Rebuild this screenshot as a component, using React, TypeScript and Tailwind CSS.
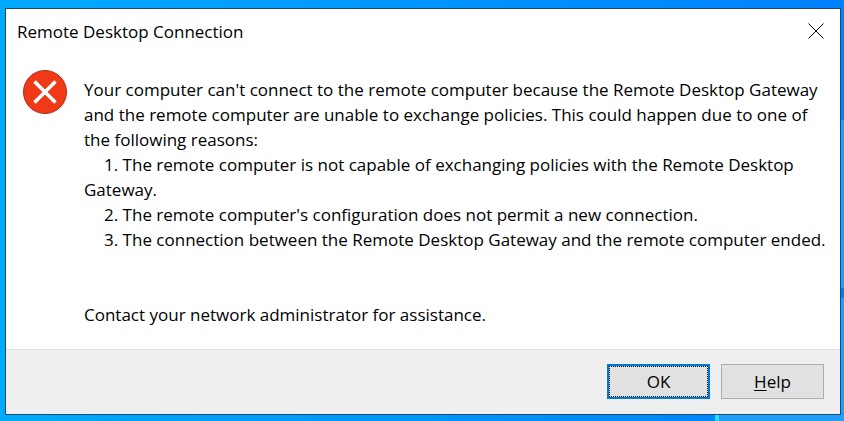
const reasons = [
  ["1. The remote computer is not capable of exchanging policies with the Remote Desktop", "Gateway."],
  ["2. The remote computer's configuration does not permit a new connection."],
  ["3. The connection between the Remote Desktop Gateway and the remote computer ended."],
];

function Wallpaper() {
  return (
    <div aria-hidden="true" className="absolute inset-0 -z-10 bg-linear-to-r from-[#00aaff] to-[#0080ff]">
      <div className="absolute top-[120px] right-0 bottom-0 w-[125px] bg-[#1f9eff]" />
      <div className="absolute top-[288px] right-0 h-[10px] w-[125px] bg-[#007ff0]" />
      <div className="absolute right-[125px] bottom-0 h-5 w-1 bg-[#22e0ff]" />
    </div>
  );
}

function ErrorIcon() {
  return (
    <svg className="size-11 shrink-0" viewBox="0 0 44 44" role="img" aria-label="Error">
      <circle cx="22" cy="22" r="21.5" fill="#f03a17" stroke="#b32a16" />
      <path d="M11.5 11.5 32.5 32.5M32.5 11.5 11.5 32.5" stroke="#fff" strokeWidth="3.6" />
    </svg>
  );
}

export default function App() {
  return (
    <main className="relative isolate min-h-screen pt-2 pr-[3px] pb-[6px] pl-[5px] font-['Open_Sans','Noto_Sans',sans-serif] text-black">
      <Wallpaper />
      <section role="alertdialog" aria-labelledby="title" aria-describedby="message" className="border border-[#1f4a68] bg-white">
        <header className="flex items-start justify-between pl-[11px]">
          <h1 id="title" className="pt-[11px] text-[17px] leading-6">Remote Desktop Connection</h1>
          <button type="button" aria-label="Close" className="flex h-11 w-12 items-center justify-center">
            <svg className="size-4" viewBox="0 0 16 16" fill="none" stroke="#000" strokeWidth="1">
              <path d="M.5.5 15.5 15.5M15.5.5.5 15.5" />
            </svg>
          </button>
        </header>
        <div className="flex gap-[17px] pt-[17px] pr-2 pb-[22px] pl-[17px]">
          <ErrorIcon />
          <div id="message" className="pt-[7px] text-[17px] leading-[25px] whitespace-nowrap">
            <p>
              Your computer can't connect to the remote computer because the Remote Desktop Gateway
              <br />
              and the remote computer are unable to exchange policies. This could happen due to one of
              <br />
              the following reasons:
            </p>
            {reasons.map((lines) => (
              <p key={lines[0]} className="indent-5">
                {lines[0]}
                {lines[1] && <br />}
                {lines[1]}
              </p>
            ))}
            <p className="pt-[50px]">Contact your network administrator for assistance.</p>
          </div>
        </div>
        <footer className="flex justify-end gap-[11px] border-t border-[#dfdfdf] bg-[#efefef] pt-[14px] pr-4 pb-[15px] text-[17px] leading-6">
          <button type="button" className="h-[35px] w-[103px] border-2 border-[#0078d7] bg-[#e1e1e1]">
            <span className="flex h-full items-center justify-center border border-dotted border-black">OK</span>
          </button>
          <button type="button" className="h-[35px] w-[103px] border border-[#adadad] bg-[#e1e1e1]">
            <span className="underline underline-offset-2">H</span>elp
          </button>
        </footer>
      </section>
    </main>
  );
}
